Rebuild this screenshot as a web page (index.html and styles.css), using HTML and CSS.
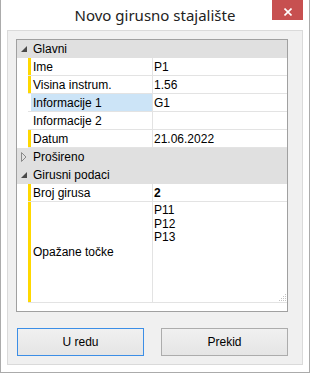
FILE: index.html
```html
<!DOCTYPE html>
<html lang="hr">
<head>
    <meta charset="UTF-8">
    <title>Novo girusno stajalište</title>
    <link rel="stylesheet" href="styles.css">
</head>
<body>
    <div class="window">
        <!-- Title bar -->
        <div class="titlebar">
            <span></span>
            <div class="title">Novo girusno stajalište</div>
            <div class="close-cell">
                <div class="close">
                    <svg width="8" height="8" viewBox="0 0 8 8"><path d="M0.5 0.5 L7.5 7.5 M7.5 0.5 L0.5 7.5" stroke="#fff" stroke-width="1.6"/></svg>
                </div>
            </div>
        </div>

        <!-- Client area -->
        <div class="client">
            <div class="grid">
                <div class="cat">
                    <span class="gut"><svg width="6" height="6" viewBox="0 0 6 6"><polygon points="6,0 6,6 0,6" fill="#4a4a4a"/></svg></span>
                    <span class="cat-name">Glavni</span>
                </div>
                <div class="row req">
                    <span class="gut"></span>
                    <div class="cells"><span class="bar"></span><span class="name">Ime</span><span class="val">P1</span></div>
                </div>
                <div class="row req">
                    <span class="gut"></span>
                    <div class="cells"><span class="bar"></span><span class="name">Visina instrum.</span><span class="val">1.56</span></div>
                </div>
                <div class="row">
                    <span class="gut"></span>
                    <div class="cells"><span class="bar"></span><span class="name selected">Informacije 1</span><span class="val">G1</span></div>
                </div>
                <div class="row">
                    <span class="gut"></span>
                    <div class="cells"><span class="bar"></span><span class="name">Informacije 2</span><span class="val"></span></div>
                </div>
                <div class="row req">
                    <span class="gut"></span>
                    <div class="cells"><span class="bar"></span><span class="name">Datum</span><span class="val">21.06.2022</span></div>
                </div>
                <div class="cat">
                    <span class="gut"><svg width="6" height="10" viewBox="0 0 6 10"><polygon points="0.5,0.5 5,5 0.5,9.5" fill="none" stroke="#8a8a8a"/></svg></span>
                    <span class="cat-name">Prošireno</span>
                </div>
                <div class="cat">
                    <span class="gut"><svg width="6" height="6" viewBox="0 0 6 6"><polygon points="6,0 6,6 0,6" fill="#4a4a4a"/></svg></span>
                    <span class="cat-name">Girusni podaci</span>
                </div>
                <div class="row req">
                    <span class="gut"></span>
                    <div class="cells"><span class="bar"></span><span class="name">Broj girusa</span><span class="val bold">2</span></div>
                </div>
                <div class="row req tall">
                    <span class="gut"></span>
                    <div class="cells">
                        <span class="bar"></span>
                        <span class="name">Opažane točke</span>
                        <div class="val multi">
                            <div>P11</div>
                            <div>P12</div>
                            <div>P13</div>
                            <svg class="grip" width="9" height="9" viewBox="0 0 9 9">
                                <g fill="#c4c4c4">
                                    <rect x="7" y="1" width="1" height="1"/>
                                    <rect x="5" y="3" width="1" height="1"/><rect x="7" y="3" width="1" height="1"/>
                                    <rect x="3" y="5" width="1" height="1"/><rect x="5" y="5" width="1" height="1"/><rect x="7" y="5" width="1" height="1"/>
                                    <rect x="1" y="7" width="1" height="1"/><rect x="3" y="7" width="1" height="1"/><rect x="5" y="7" width="1" height="1"/><rect x="7" y="7" width="1" height="1"/>
                                </g>
                            </svg>
                        </div>
                    </div>
                </div>
            </div>

            <div class="buttons">
                <button class="btn default">U redu</button>
                <button class="btn">Prekid</button>
            </div>
        </div>
    </div>
</body>
</html>
```

FILE: styles.css
```css
body {
    margin: 0;
    background-color: #fff;
    font-family: "Liberation Sans", Arial, sans-serif;
    font-size: 12px;
    color: #000;
}
.window {
    width: 310px;
    height: 373px;
    box-sizing: border-box;
    border: 1px solid #ababab;
    border-top: none;
    background-color: #fff;
}
.titlebar {
    display: grid;
    grid-template-columns: 37px 1fr 37px;
    height: 30px;
}
.title {
    text-align: center;
    font-family: "Noto Sans", sans-serif;
    font-size: 15px;
    line-height: 30px;
    color: #222;
}
.close {
    width: 31px;
    height: 20px;
    background-color: #c75050;
    display: flex;
    justify-content: center;
    padding-top: 8px;
    box-sizing: border-box;
}
.close svg {
    display: block;
}
.client {
    margin: 0 6px 7px 6px;
    border: 1px solid #dadada;
    background-color: #f0f0f0;
    padding: 8px 14px 8px 8px;
}
.grid {
    height: 273px;
    box-sizing: border-box;
    border: 1px solid #a0a0a0;
    background-color: #fff;
}
.cat {
    display: flex;
    height: 18px;
    align-items: center;
    background-color: #e0e0e0;
}
.gut {
    width: 11px;
    flex-shrink: 0;
    display: flex;
    padding-left: 4px;
    box-sizing: border-box;
}
.cat-name {
    padding-left: 5px;
}
.row {
    display: flex;
    height: 18px;
}
.row.tall {
    height: 101px;
}
.cells {
    flex: 1;
    display: flex;
    border-bottom: 1px solid #e3e3e3;
}
.bar {
    width: 3px;
    flex-shrink: 0;
}
.req .bar {
    background-color: #ffd800;
}
.name {
    width: 121px;
    flex-shrink: 0;
    padding-left: 2px;
    box-sizing: border-box;
    display: flex;
    align-items: center;
}
.name.selected {
    background-color: #cce4f7;
}
.val {
    flex: 1;
    border-left: 1px solid #e3e3e3;
    padding-left: 1px;
    display: flex;
    align-items: center;
}
.val.bold {
    font-weight: bold;
}
.val.multi {
    flex-direction: column;
    align-items: flex-start;
    padding-top: 2px;
    line-height: 13.5px;
}
.grip {
    margin-top: auto;
    align-self: flex-end;
    display: block;
}
.buttons {
    display: flex;
    gap: 17px;
    padding-left: 1px;
    margin-top: 16px;
}
.btn {
    width: 127px;
    height: 28px;
    border: 1px solid #acacac;
    background: linear-gradient(#f0f0f0, #e5e5e5);
    font-family: "Liberation Sans", Arial, sans-serif;
    font-size: 12px;
    color: #000;
    padding: 0;
}
.btn.default {
    border-color: #3c8ee6;
}
```
